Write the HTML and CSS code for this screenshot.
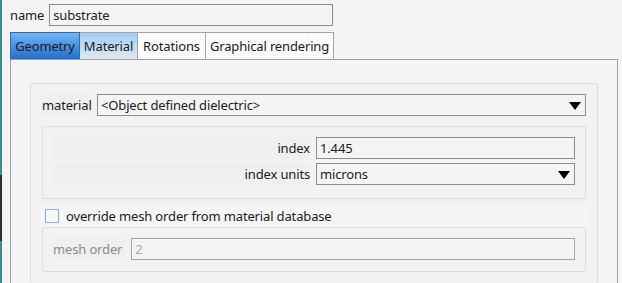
FILE: index.html
```html
<!DOCTYPE html>
<html>
	<head>
		<meta charset="utf-8">
		<title>substrate</title>
		<link rel="stylesheet" href="styles.css">
	</head>
	<body>
		<div class="app">
			<div class="edge"></div>
			<div class="main">
				<div class="name-row">
					<span class="name-lbl">name</span>
					<div class="field name-field">substrate</div>
				</div>
				<div class="tabs">
					<div class="tab geo">Geometry</div>
					<div class="tab mat">Material</div>
					<div class="tab rot">Rotations</div>
					<div class="tab gfx">Graphical rendering</div>
				</div>
				<div class="pane">
					<div class="group">
						<div class="mat-row">
							<span class="lbl">material</span>
							<div class="combo mat-combo">&lt;Object defined dielectric&gt;<i class="arrow"></i></div>
						</div>
						<div class="sub props">
							<div class="frow">
								<span class="lbl wide">index</span>
								<div class="field val">1.445</div>
							</div>
							<div class="frow">
								<span class="lbl wide">index units</span>
								<div class="combo val">microns<i class="arrow"></i></div>
							</div>
						</div>
						<div class="check-row">
							<span class="box"></span>
							<span>override mesh order from material database</span>
						</div>
						<div class="sub mesh">
							<div class="frow">
								<span class="lbl dim">mesh order</span>
								<div class="field dis">2</div>
							</div>
						</div>
					</div>
				</div>
			</div>
		</div>
	</body>
</html>
```

FILE: styles.css
```css
* {margin:0; padding:0; box-sizing:border-box;}
html, body {height:100%; overflow:hidden;}
body {background:#f4f4f4; font-family:"Noto Sans", "Open Sans", sans-serif; font-size:13px; letter-spacing:-0.15px; color:#1f1a12;}

.app {display:flex; height:100%;}
.edge {width:2px; flex:none; background:linear-gradient(#3f8c8c 0, #3f8c8c 175px, #2f2f2f 175px, #2f2f2f 241px, #3f8c8c 241px);}
.main {flex:1; padding:4px 4px 0 8px; display:flex; flex-direction:column;}

.field, .combo {border:1px solid #8c8c8c; background:#f4f4f4; height:22px; line-height:20px; padding:0 3px; white-space:nowrap; position:relative;}

.name-row {display:flex; align-items:center; gap:5px;}
.name-field {width:284px;}

.tabs {display:flex; margin-top:6px; height:27px;}
.tab {flex:none; border:1px solid #a4a4a4; border-bottom:none; border-left:none; line-height:26px; text-align:center; white-space:nowrap; background:#fbfbfb;}
.tab.geo {border-left:1px solid #2a6db8; width:70px; background:linear-gradient(#72b4f4, #1f6fcf); border-color:#2a6db8;}
.tab.mat {width:58px; background:linear-gradient(#9fcdf6, #dfe9ef);}
.tab.rot {width:68px;}
.tab.gfx {width:128px;}

.pane {flex:1; width:608px; border:1px solid #a0a0a0; border-bottom:none; padding:23px 19px 0 19px; display:flex;}
.group {flex:1; border:1px solid #dcdcdc; border-bottom:none; border-radius:2px; background:#f2f2f2; padding:10px 11px 0 10px;}

.lbl {background:#efefef; height:22px; line-height:22px; white-space:nowrap;}
.mat-row {display:flex; gap:6px;}
.mat-row .lbl {width:50px; padding-left:1px;}
.mat-combo {flex:1;}

.arrow {position:absolute; right:4px; top:7px; width:0; height:0; border-left:6px solid transparent; border-right:6px solid transparent; border-top:8px solid #000;}

.sub {margin-left:1px; border:1px solid #dddddd; border-radius:2px; background:#f2f2f2;}
.props {margin-top:10px; padding:10px 10px 13px 10px; display:flex; flex-direction:column; gap:4px;}
.frow {display:flex; gap:6px; align-items:center;}
.lbl.wide {flex:1; text-align:right;}
.val {width:259px;}

.check-row {margin-top:6px; height:22px; display:flex; align-items:center; gap:7px; padding-left:4px; background:#f5f5f5;}
.box {width:14px; height:14px; border:1px solid #7cb8ef; background:#f8f8f8;}

.mesh {padding:10px 10px 11px 10px;}
.lbl.dim {color:#8a8a8a; padding-right:3px;}
.field.dis {flex:1; color:#a8a8a8; border-color:#a4a4a4;}
```
